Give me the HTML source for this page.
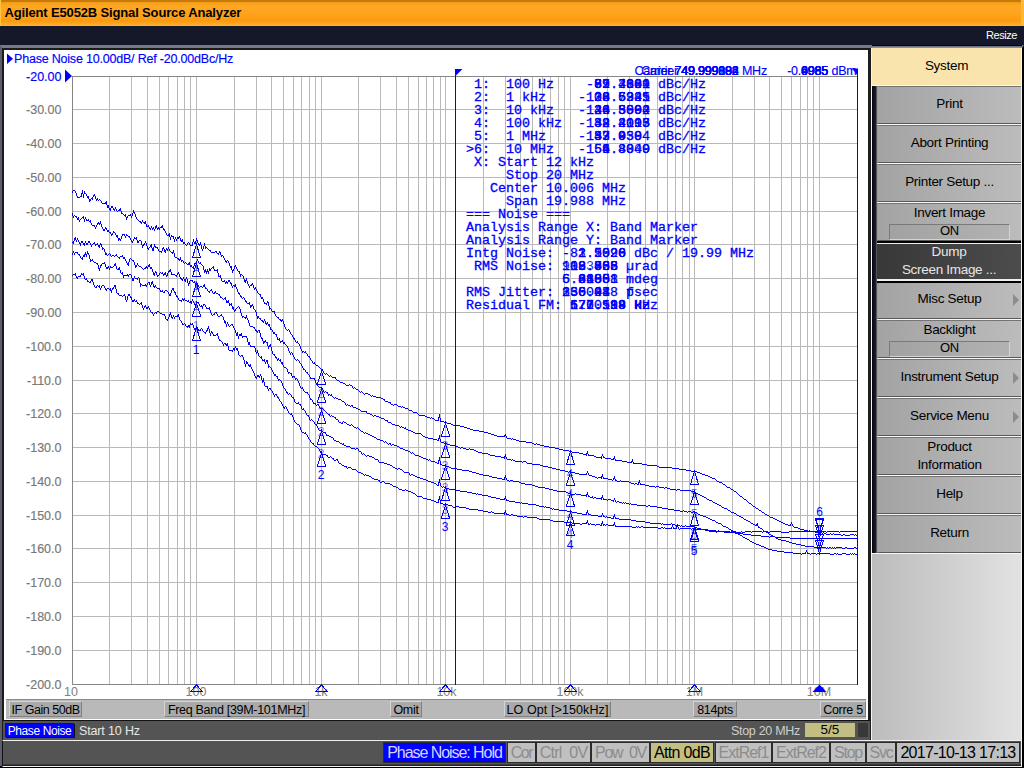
<!DOCTYPE html>
<html><head><meta charset="utf-8"><title>Agilent E5052B Signal Source Analyzer</title>
<style>
*{box-sizing:border-box;margin:0;padding:0}
html,body{width:1024px;height:768px;overflow:hidden;background:#000}
body{position:relative;font-family:"Liberation Sans","DejaVu Sans",sans-serif;font-size:13px;color:#000}
.abs{position:absolute}
#title{position:absolute;left:0;top:0;width:1024px;height:26px;background:linear-gradient(#c47808 0px,#c97c0a 1.5px,#f39c18 2.5px,#ffa824 6px,#ffa31c 14px,#fb9a10 21px,#ffac2c 25px,#ffb63c 26px);border-left:1px solid #ffc640;border-right:3px solid #ffb838}
#title span{position:absolute;left:3.5px;top:5px;font-weight:bold;font-size:13px;letter-spacing:-0.15px;color:#000;white-space:nowrap}
#band{position:absolute;left:0;top:26px;width:1024px;height:20px;background:#151828}
#band span{position:absolute;right:7px;top:3px;color:#fff;font-size:11px;line-height:13px;letter-spacing:-0.45px}
#lframe{position:absolute;left:0;top:45px;width:872px;height:696px;background:#1c1c1c;border-left:2px solid #5a5f6b;border-top:3px solid #747987}
#white{position:absolute;left:4px;top:50px;width:864px;height:670px;background:#fff}
#statrow{position:absolute;left:6px;top:699px;width:860px;height:20px;background:#b9b9b9;border-top:1px solid #8a8a8a}
.sb{position:absolute;top:701px;height:16px;background:#a9a9a9;border:1px solid;border-color:#d4d4d4 #808080 #808080 #d4d4d4;font-size:12.5px;line-height:16px;text-align:center;white-space:nowrap;letter-spacing:-0.3px}
#chrow{position:absolute;left:3px;top:720px;width:867px;height:20px;background:#545454;border-top:1px solid #111}
#pn{position:absolute;left:5px;top:723px;width:69px;height:14px;box-shadow:1px 1px 0 #111;background:#0000ff;color:#fff;font-size:12px;line-height:16px;text-align:center;letter-spacing:-0.4px;white-space:nowrap}
#start{position:absolute;left:79px;top:723.5px;color:#e8e8e8;font-size:12.5px;line-height:15px;white-space:nowrap;letter-spacing:-0.15px}
#stop{position:absolute;left:731px;top:723.5px;color:#cfcfcf;font-size:12.5px;line-height:15px;white-space:nowrap;letter-spacing:-0.3px}
#swp{position:absolute;left:805px;top:723px;width:50px;height:14px;background:#c3bf82;font-size:13.5px;line-height:14px;text-align:center}
#dk{position:absolute;left:858px;top:723px;width:10px;height:14px;background:#383838}
#rpanel{position:absolute;left:872px;top:45px;width:152px;height:696px;background:linear-gradient(90deg,#bcbcbc,#e2e2e2);border-right:2px solid #000;border-top:3px solid #747987}
#rtop{position:absolute;left:872px;top:45px;width:150px;height:3px;background:linear-gradient(#06070c 0,#06070c 1px,#5c6272 1px,#9aa0ae 3px)}
#rline{position:absolute;left:870.5px;top:48px;width:1.7px;height:693px;background:#f6f6f6}
#rline2{position:absolute;left:1021px;top:48px;width:1.2px;height:719px;background:#f6f6f6}
#rwhite{position:absolute;left:872px;top:85px;width:150px;height:469px;background:#f8f8f8}
#sys{position:absolute;left:872px;top:48px;width:149px;height:37px;background:#f9e4ae;text-align:center;line-height:35px;font-size:13.5px;letter-spacing:-0.3px}
#kstrip{position:absolute;left:872px;top:86px;width:5px;height:467px;background:linear-gradient(90deg,#05060c,#1c2030 80%,#8a8a8a)}
.key{position:absolute;left:877px;width:144px;height:38px;background:linear-gradient(90deg,#a3a3a3,#bcbcbc);border-top:1px solid #747474;border-bottom:1px solid #585858;border-left:1px solid #999;text-align:center;font-size:13.5px;letter-spacing:-0.3px;white-space:nowrap}
.key.dark{background:linear-gradient(90deg,#383838,#4c4c4c);color:#e6e6e6;border:0;margin-top:-1px;height:42px;left:877px;border-top:2px solid #000;border-bottom:2px solid #000;box-shadow:inset 0 1px 0 #f0f0f0,inset 0 -2px 0 #f0f0f0;padding-top:0px;z-index:2}
.k1{line-height:34px}
.k2a{line-height:18px}
.k2b{line-height:18px}
.on{margin:2px 11px 0 11px;height:16px;line-height:12px;background:linear-gradient(90deg,#a2a2a2,#b2b2b2);border:1px solid;border-color:#7a7a7a #d4d4d4 #d4d4d4 #7a7a7a;font-size:13px}
.arr{position:absolute;right:2px;top:12px;width:0;height:0;border-left:6px solid #8c8c8c;border-top:6px solid transparent;border-bottom:6px solid transparent}
#bbar{position:absolute;left:2px;top:740px;width:1020px;height:27px;background:#545454;border-top:1.4px solid #f0f0f0;border-bottom:1.4px solid #f0f0f0;border-left:1.5px solid #111;box-shadow:inset 0 -1.5px 0 #222}
.bx{position:absolute;top:742px;height:21px;background:#c0c0c0;border:1px solid #2c2c2c;font-size:16px;line-height:20px;text-align:center;color:#8c8c8c;white-space:nowrap;overflow:hidden;letter-spacing:-0.7px}
.bx.blue{background:#0000ff;color:#d4d4ff;letter-spacing:-1.05px}
.bx.kh{background:#c3bf82;color:#000}
.bx.blk{color:#000}
.yl{position:absolute;left:15.5px;width:46px;text-align:right;font-size:12.5px;line-height:16px;color:#787878;-webkit-text-stroke:0.15px #787878}
.yl.act{color:#0000ff;-webkit-text-stroke:0.15px #0000ff}
.xl{position:absolute;top:685px;font-size:12.5px;line-height:15px;color:#808080}
#hdr{position:absolute;left:14px;top:52px;-webkit-text-stroke:0.15px #0000ff;font-size:12.5px;line-height:15px;color:#0000ff;white-space:nowrap;letter-spacing:-0.2px}
.mono{position:absolute;left:466px;top:79px;font-family:"Liberation Mono","DejaVu Sans Mono",monospace;font-size:12.5px;line-height:13px;transform:scaleX(1.0667);transform-origin:0 0;-webkit-text-stroke:0.3px #0000ff;color:#0000ff;white-space:pre}
.hid{visibility:hidden}
.mono.ex{-webkit-text-stroke:0;opacity:0.85}
.car{position:absolute;left:600px;width:167px;text-align:right;top:64px;font-size:12.5px;-webkit-text-stroke:0.15px #0000ff;line-height:14px;color:#0000ff;white-space:nowrap;letter-spacing:-0.2px}
.pow{position:absolute;left:780px;top:64px;width:76.5px;text-align:right;font-size:12.5px;-webkit-text-stroke:0.15px #0000ff;line-height:14px;color:#0000ff;white-space:nowrap;letter-spacing:-0.2px}
svg text{font-family:"Liberation Sans",sans-serif;font-size:12px;fill:#0000ff}
</style></head><body>
<div id="title"><span>Agilent E5052B Signal Source Analyzer</span></div>
<div id="band"><span>Resize</span></div>
<div id="lframe"></div>
<div style="position:absolute;left:0;top:741px;width:1.5px;height:25px;background:#5a5f6b;z-index:3"></div>
<div id="white"></div>
<div id="hdr">Phase Noise 10.00dB/ Ref -20.00dBc/Hz</div>
<div class="yl act" style="top:69px">-20.00</div><div class="yl" style="top:102px">-30.00</div><div class="yl" style="top:136px">-40.00</div><div class="yl" style="top:170px">-50.00</div><div class="yl" style="top:204px">-60.00</div><div class="yl" style="top:237px">-70.00</div><div class="yl" style="top:271px">-80.00</div><div class="yl" style="top:305px">-90.00</div><div class="yl" style="top:339px">-100.0</div><div class="yl" style="top:373px">-110.0</div><div class="yl" style="top:406px">-120.0</div><div class="yl" style="top:440px">-130.0</div><div class="yl" style="top:474px">-140.0</div><div class="yl" style="top:508px">-150.0</div><div class="yl" style="top:541px">-160.0</div><div class="yl" style="top:575px">-170.0</div><div class="yl" style="top:609px">-180.0</div><div class="yl" style="top:643px">-190.0</div><div class="yl" style="top:677px">-200.0</div>
<div class="xl" style="left:64px;text-align:left">10</div><div class="xl" style="left:176px;width:40px;text-align:center">100</div><div class="xl" style="left:301px;width:40px;text-align:center">1k</div><div class="xl" style="left:426.5px;width:40px;text-align:center">10k</div><div class="xl" style="left:550px;width:40px;text-align:center">100k</div><div class="xl" style="left:674.5px;width:40px;text-align:center">1M</div><div class="xl" style="left:799px;width:40px;text-align:center">10M</div>
<svg class="abs" style="left:0;top:0" width="872" height="700" viewBox="0 0 872 700">
<path d="M109.5 76V684M131.5 76V684M147.5 76V684M159.5 76V684M168.5 76V684M177.5 76V684M184.5 76V684M190.5 76V684M196.5 76V684M234.5 76V684M256.5 76V684M271.5 76V684M283.5 76V684M293.5 76V684M301.5 76V684M309.5 76V684M315.5 76V684M321.5 76V684M358.5 76V684M380.5 76V684M396.5 76V684M408.5 76V684M418.5 76V684M426.5 76V684M433.5 76V684M440.5 76V684M445.5 76V684M483.5 76V684M505.5 76V684M520.5 76V684M532.5 76V684M542.5 76V684M550.5 76V684M558.5 76V684M564.5 76V684M570.5 76V684M607.5 76V684M629.5 76V684M645.5 76V684M657.5 76V684M667.5 76V684M675.5 76V684M682.5 76V684M689.5 76V684M694.5 76V684M732.5 76V684M754.5 76V684M769.5 76V684M781.5 76V684M791.5 76V684M800.5 76V684M807.5 76V684M813.5 76V684M819.5 76V684M72 109.5H857M72 143.5H857M72 177.5H857M72 211.5H857M72 244.5H857M72 278.5H857M72 312.5H857M72 346.5H857M72 380.5H857M72 413.5H857M72 447.5H857M72 481.5H857M72 515.5H857M72 548.5H857M72 582.5H857M72 616.5H857M72 650.5H857" stroke="#b9b9b9" stroke-width="1" fill="none" shape-rendering="crispEdges"/>
<path d="M72.5 76V684.5H857" stroke="#868686" stroke-width="1" fill="none" shape-rendering="crispEdges"/>
<path d="M72 76.5H857" stroke="#868686" stroke-width="1" fill="none" shape-rendering="crispEdges"/>
<path d="M857.5 70V685M455.5 69V685" stroke="#0000ff" stroke-width="1" fill="none" shape-rendering="crispEdges"/>
<path d="M455 69h7.5l-7.5 7.5z" fill="#0000ff"/>
<path d="M852 68.5h6v7.5z" fill="#0000ff"/>
<path d="M7 53.5l6 5.2-6 5.2zM65 69.5l7 6.5-7 6.5z" fill="#0000ff"/>
<path d="M72.5 191v2M73.5 190v1M74.5 190v1M75.5 191v2M76.5 193v3M77.5 196v2M78.5 197v1M79.5 197v1M80.5 196v1M81.5 193v4M82.5 190v4M83.5 194v4M84.5 191v3M85.5 193v1M86.5 194v2M87.5 196v2M88.5 196v3M89.5 199v3M90.5 199v2M91.5 198v1M92.5 197v3M93.5 195v2M94.5 194v2M95.5 196v3M96.5 199v2M97.5 198v2M98.5 200v1M99.5 199v1M100.5 200v1M101.5 201v2M102.5 203v1M103.5 203v1M104.5 203v1M105.5 202v2M106.5 201v4M107.5 205v3M108.5 205v3M109.5 208v2M110.5 208v3M111.5 206v2M112.5 206v2M113.5 208v2M114.5 209v2M115.5 207v2M116.5 209v2M117.5 211v1M118.5 210v1M119.5 209v2M120.5 208v3M121.5 211v3M122.5 213v1M123.5 214v1M124.5 215v1M125.5 214v3M126.5 217v3M127.5 216v2M128.5 215v1M129.5 215v1M130.5 214v2M131.5 216v2M132.5 213v3M133.5 210v3M134.5 212v2M135.5 214v3M136.5 217v2M137.5 219v1M138.5 220v1M139.5 221v1M140.5 221v2M141.5 222v2M142.5 220v2M143.5 222v1M144.5 222v2M145.5 221v3M146.5 224v3M147.5 226v1M148.5 225v2M149.5 227v2M150.5 228v2M151.5 226v2M152.5 228v2M153.5 227v2M154.5 229v2M155.5 226v3M156.5 225v3M157.5 228v2M158.5 227v2M159.5 228v2M160.5 227v1M161.5 226v2M162.5 225v3M163.5 228v2M164.5 229v2M165.5 231v2M166.5 233v2M167.5 235v1M168.5 234v2M169.5 233v4M170.5 237v3M171.5 235v2M172.5 236v1M173.5 236v3M174.5 239v3M175.5 237v2M176.5 239v2M177.5 237v2M178.5 237v2M179.5 236v2M180.5 238v3M181.5 240v2M182.5 239v3M183.5 242v2M184.5 242v2M185.5 244v1M186.5 245v1M187.5 243v2M188.5 242v1M189.5 243v2M190.5 245v1M191.5 245v1M192.5 242v4M193.5 239v3M194.5 242v2M195.5 241v3M196.5 238v3M197.5 240v3M198.5 243v2M199.5 244v2M200.5 242v3M201.5 245v4M202.5 249v2M203.5 246v3M204.5 243v3M205.5 246v3M206.5 247v1M207.5 248v1M208.5 249v1M209.5 250v1M210.5 250v2M211.5 252v1M212.5 252v1M213.5 252v1M214.5 252v1M215.5 251v1M216.5 251v2M217.5 253v1M218.5 253v2M219.5 251v2M220.5 252v3M221.5 255v2M222.5 255v1M223.5 256v2M224.5 258v2M225.5 260v2M226.5 261v2M227.5 260v1M228.5 261v2M229.5 263v3M230.5 266v2M231.5 266v4M232.5 270v3M233.5 269v2M234.5 266v3M235.5 265v2M236.5 267v2M237.5 269v2M238.5 271v1M239.5 271v3M240.5 274v3M241.5 274v1M242.5 275v1M243.5 276v3M244.5 279v3M245.5 280v3M246.5 278v3M247.5 281v3M248.5 284v2M249.5 286v2M250.5 285v1M251.5 284v2M252.5 283v2M253.5 285v3M254.5 288v2M255.5 287v2M256.5 289v2M257.5 291v2M258.5 293v1M259.5 294v1M260.5 294v3M261.5 297v2M262.5 297v2M263.5 299v3M264.5 302v2M265.5 303v1M266.5 303v2M267.5 301v2M268.5 302v4M269.5 306v4M270.5 308v1M271.5 309v2M272.5 311v1M273.5 311v1M274.5 311v3M275.5 314v2M276.5 316v1M277.5 317v1M278.5 317v2M279.5 319v1M280.5 319v2M281.5 320v2M282.5 319v2M283.5 321v3M284.5 324v3M285.5 327v2M286.5 329v1M287.5 330v1M288.5 329v1M289.5 330v2M290.5 332v2M291.5 334v1M292.5 335v2M293.5 337v2M294.5 338v2M295.5 340v2M296.5 342v1M297.5 341v2M298.5 343v1M299.5 344v2M300.5 346v3M301.5 349v2M302.5 351v2M303.5 351v1M304.5 352v1M305.5 351v2M306.5 353v1M307.5 354v2M308.5 356v1M309.5 356v2M310.5 358v2M311.5 360v1M312.5 361v2M313.5 363v1M314.5 362v2M315.5 364v1M316.5 365v1M317.5 365v1M318.5 366v1M319.5 367v1M320.5 368v1M321.5 369v1M322.5 369v2M323.5 371v2M324.5 373v1M325.5 374v1M326.5 373v1M327.5 374v1M328.5 375v1M329.5 376v1M330.5 375v1M331.5 376v1M332.5 377v1M333.5 377v1M334.5 377v1M335.5 377v2M336.5 379v1M337.5 380v1M338.5 380v1M339.5 381v1M340.5 382v1M341.5 382v1M342.5 382v1M343.5 383v1M344.5 383v1M345.5 384v1M346.5 385v1M347.5 385v1M348.5 385v1M349.5 384v1M350.5 385v1M351.5 385v1M352.5 386v2M353.5 388v1M354.5 387v1M355.5 388v1M356.5 389v1M357.5 389v1M358.5 390v1M359.5 391v1M360.5 392v1M361.5 391v1M362.5 392v1M363.5 393v1M364.5 394v1M365.5 393v1M366.5 393v1M367.5 393v1M368.5 394v1M369.5 394v1M370.5 395v1M371.5 396v1M372.5 395v1M373.5 396v1M374.5 396v1M375.5 396v1M376.5 397v1M377.5 397v1M378.5 397v1M379.5 397v1M380.5 397v1M381.5 398v1M382.5 398v1M383.5 399v1M384.5 399v2M385.5 401v1M386.5 401v1M387.5 401v1M388.5 402v1M389.5 402v1M390.5 402v2M391.5 404v1M392.5 404v1M393.5 405v1M394.5 404v1M395.5 404v1M396.5 404v1M397.5 405v1M398.5 406v1M399.5 406v1M400.5 406v1M401.5 407v1M402.5 406v1M403.5 407v1M404.5 407v1M405.5 408v1M406.5 408v1M407.5 408v1M408.5 409v1M409.5 410v1M410.5 410v1M411.5 410v1M412.5 411v1M413.5 412v1M414.5 412v1M415.5 412v1M416.5 412v1M417.5 413v1M418.5 414v1M419.5 415v1M420.5 415v1M421.5 415v1M422.5 415v1M423.5 415v1M424.5 415v1M425.5 416v1M426.5 416v1M427.5 417v1M428.5 417v1M429.5 417v1M430.5 418v1M431.5 417v1M432.5 418v1M433.5 418v1M434.5 419v1M435.5 420v1M436.5 420v1M437.5 420v1M438.5 417v4M439.5 414v4M440.5 418v4M441.5 421v1M442.5 421v1M443.5 421v1M444.5 422v1M445.5 422v1M446.5 422v1M447.5 423v1M448.5 423v1M449.5 423v1M450.5 423v1M451.5 424v1M452.5 424v1M453.5 425v1M454.5 425v1M455.5 425v1M456.5 425v1M457.5 425v1M458.5 425v1M459.5 425v1M460.5 426v1M461.5 426v1M462.5 426v1M463.5 426v1M464.5 427v1M465.5 427v1M466.5 427v1M467.5 428v1M468.5 428v1M469.5 428v1M470.5 429v1M471.5 429v1M472.5 429v1M473.5 430v1M474.5 430v1M475.5 430v1M476.5 430v1M477.5 430v1M478.5 430v1M479.5 431v1M480.5 431v1M481.5 431v1M482.5 431v1M483.5 431v1M484.5 432v1M485.5 432v1M486.5 432v1M487.5 432v1M488.5 433v1M489.5 433v1M490.5 433v1M491.5 434v1M492.5 434v1M493.5 434v1M494.5 435v1M495.5 435v1M496.5 435v1M497.5 436v1M498.5 436v1M499.5 436v1M500.5 436v1M501.5 436v1M502.5 436v1M503.5 436v1M504.5 435v2M505.5 434v2M506.5 436v2M507.5 438v1M508.5 438v1M509.5 438v1M510.5 438v1M511.5 439v1M512.5 438v1M513.5 439v1M514.5 439v1M515.5 439v1M516.5 440v1M517.5 440v1M518.5 440v1M519.5 441v1M520.5 441v1M521.5 441v1M522.5 441v1M523.5 441v1M524.5 441v1M525.5 441v1M526.5 442v1M527.5 442v1M528.5 442v1M529.5 442v1M530.5 442v1M531.5 442v1M532.5 443v1M533.5 443v1M534.5 444v1M535.5 444v1M536.5 443v1M537.5 444v1M538.5 444v1M539.5 444v1M540.5 445v1M541.5 445v1M542.5 445v1M543.5 445v1M544.5 446v1M545.5 446v1M546.5 446v1M547.5 446v1M548.5 446v1M549.5 447v1M550.5 447v1M551.5 447v1M552.5 447v1M553.5 447v1M554.5 447v1M555.5 448v1M556.5 448v1M557.5 448v1M558.5 448v1M559.5 449v1M560.5 449v1M561.5 449v1M562.5 449v1M563.5 450v1M564.5 450v1M565.5 450v1M566.5 450v1M567.5 450v1M568.5 450v1M569.5 451v1M570.5 451v1M571.5 451v1M572.5 452v1M573.5 452v1M574.5 452v1M575.5 452v1M576.5 452v1M577.5 452v1M578.5 452v1M579.5 453v1M580.5 453v1M581.5 453v1M582.5 453v1M583.5 454v1M584.5 454v1M585.5 454v1M586.5 453v3M587.5 451v3M588.5 454v2M589.5 455v1M590.5 455v1M591.5 455v1M592.5 455v1M593.5 455v1M594.5 456v1M595.5 456v1M596.5 457v1M597.5 457v1M598.5 457v1M599.5 457v1M600.5 457v1M601.5 456v3M602.5 454v2M603.5 456v2M604.5 457v1M605.5 458v1M606.5 458v1M607.5 458v1M608.5 458v1M609.5 458v1M610.5 458v1M611.5 459v1M612.5 459v1M613.5 458v2M614.5 456v3M615.5 459v2M616.5 460v1M617.5 460v1M618.5 460v1M619.5 460v1M620.5 460v1M621.5 460v1M622.5 461v1M623.5 461v1M624.5 461v1M625.5 461v1M626.5 461v1M627.5 462v1M628.5 462v1M629.5 462v1M630.5 462v1M631.5 461v2M632.5 459v3M633.5 462v2M634.5 463v1M635.5 463v1M636.5 463v1M637.5 463v1M638.5 463v1M639.5 463v1M640.5 463v1M641.5 463v1M642.5 464v1M643.5 464v1M644.5 464v1M645.5 464v1M646.5 464v1M647.5 465v1M648.5 465v1M649.5 465v1M650.5 465v1M651.5 465v1M652.5 465v1M653.5 465v1M654.5 465v1M655.5 465v1M656.5 465v1M657.5 466v1M658.5 466v1M659.5 467v1M660.5 467v1M661.5 467v1M662.5 467v1M663.5 467v1M664.5 467v1M665.5 467v1M666.5 467v1M667.5 467v1M668.5 467v1M669.5 467v1M670.5 467v1M671.5 467v1M672.5 468v1M673.5 468v1M674.5 468v1M675.5 468v1M676.5 468v1M677.5 468v1M678.5 468v1M679.5 469v1M680.5 469v1M681.5 469v1M682.5 469v1M683.5 469v1M684.5 469v1M685.5 469v1M686.5 470v1M687.5 470v1M688.5 470v1M689.5 470v1M690.5 470v1M691.5 471v1M692.5 471v1M693.5 471v1M694.5 471v1M695.5 471v1M696.5 471v1M697.5 472v1M698.5 472v1M699.5 472v1M700.5 473v1M701.5 473v1M702.5 474v1M703.5 474v1M704.5 474v1M705.5 475v1M706.5 475v1M707.5 475v1M708.5 476v1M709.5 476v1M710.5 477v1M711.5 477v1M712.5 478v1M713.5 478v1M714.5 478v1M715.5 479v1M716.5 480v1M717.5 481v1M718.5 481v1M719.5 482v1M720.5 482v1M721.5 482v1M722.5 483v1M723.5 484v1M724.5 484v1M725.5 485v1M726.5 486v1M727.5 487v1M728.5 487v1M729.5 487v1M730.5 488v1M731.5 489v1M732.5 489v1M733.5 490v1M734.5 491v1M735.5 491v1M736.5 492v1M737.5 493v1M738.5 494v1M739.5 495v1M740.5 496v1M741.5 496v1M742.5 497v1M743.5 498v1M744.5 499v1M745.5 499v1M746.5 500v1M747.5 501v1M748.5 502v1M749.5 503v1M750.5 503v1M751.5 504v1M752.5 505v1M753.5 506v1M754.5 506v1M755.5 507v1M756.5 508v1M757.5 508v1M758.5 509v1M759.5 510v1M760.5 510v1M761.5 511v1M762.5 512v1M763.5 512v1M764.5 513v1M765.5 514v1M766.5 514v1M767.5 515v1M768.5 515v1M769.5 516v1M770.5 517v1M771.5 517v1M772.5 517v1M773.5 518v1M774.5 518v1M775.5 519v1M776.5 519v1M777.5 520v1M778.5 520v1M779.5 521v1M780.5 521v1M781.5 522v1M782.5 522v1M783.5 523v1M784.5 523v1M785.5 524v1M786.5 524v1M787.5 524v1M788.5 525v1M789.5 525v1M790.5 524v2M791.5 522v2M792.5 524v2M793.5 526v1M794.5 527v1M795.5 527v1M796.5 527v1M797.5 527v1M798.5 528v1M799.5 528v1M800.5 529v1M801.5 529v1M802.5 529v1M803.5 529v1M804.5 530v1M805.5 530v1M806.5 530v1M807.5 530v1M808.5 531v1M809.5 530v1M810.5 531v1M811.5 531v1M812.5 531v1M813.5 531v1M814.5 531v1M815.5 532v1M816.5 532v1M817.5 532v1M818.5 532v1M819.5 532v1M820.5 532v1M821.5 532v1M822.5 533v1M823.5 532v1M824.5 533v1M825.5 533v1M826.5 534v1M827.5 534v1M828.5 534v1M829.5 534v1M830.5 533v1M831.5 534v1M832.5 534v1M833.5 533v1M834.5 534v1M835.5 534v1M836.5 534v1M837.5 534v1M838.5 534v1M839.5 534v1M840.5 534v1M841.5 535v1M842.5 535v1M843.5 534v1M844.5 534v1M845.5 535v1M846.5 535v1M847.5 535v1M848.5 535v1M849.5 535v1M850.5 534v1M851.5 534v1M852.5 534v1M853.5 534v1M854.5 535v1M855.5 534v1M856.5 535v1M857.5 534v1" stroke="#0000ff" stroke-width="1" fill="none" stroke-linejoin="round" shape-rendering="crispEdges"/><path d="M72.5 213v3M73.5 216v2M74.5 215v1M75.5 216v1M76.5 216v2M77.5 218v2M78.5 217v3M79.5 220v2M80.5 219v1M81.5 218v1M82.5 217v1M83.5 216v3M84.5 219v3M85.5 217v2M86.5 219v2M87.5 220v1M88.5 219v2M89.5 221v1M90.5 220v3M91.5 223v2M92.5 225v1M93.5 225v1M94.5 225v2M95.5 227v2M96.5 225v2M97.5 223v2M98.5 222v2M99.5 223v2M100.5 221v3M101.5 224v3M102.5 227v2M103.5 229v2M104.5 229v2M105.5 227v2M106.5 228v2M107.5 230v2M108.5 230v2M109.5 232v1M110.5 232v2M111.5 234v2M112.5 233v2M113.5 231v2M114.5 232v1M115.5 233v2M116.5 235v2M117.5 235v3M118.5 238v3M119.5 238v2M120.5 239v2M121.5 236v3M122.5 234v2M123.5 234v1M124.5 234v2M125.5 236v2M126.5 234v2M127.5 235v1M128.5 236v1M129.5 236v2M130.5 238v2M131.5 240v2M132.5 241v2M133.5 239v2M134.5 237v2M135.5 238v1M136.5 237v3M137.5 240v3M138.5 241v2M139.5 240v1M140.5 240v1M141.5 241v4M142.5 245v3M143.5 244v2M144.5 243v2M145.5 241v2M146.5 243v3M147.5 246v3M148.5 248v2M149.5 247v1M150.5 245v2M151.5 244v4M152.5 248v3M153.5 247v4M154.5 244v3M155.5 246v2M156.5 247v1M157.5 247v2M158.5 249v2M159.5 251v1M160.5 251v1M161.5 251v2M162.5 248v3M163.5 247v2M164.5 249v3M165.5 250v3M166.5 248v2M167.5 249v2M168.5 247v2M169.5 249v2M170.5 251v1M171.5 252v1M172.5 252v2M173.5 250v3M174.5 253v4M175.5 257v1M176.5 257v1M177.5 258v1M178.5 258v2M179.5 259v2M180.5 257v3M181.5 260v2M182.5 260v1M183.5 261v2M184.5 263v1M185.5 262v1M186.5 263v1M187.5 264v1M188.5 263v2M189.5 262v3M190.5 265v2M191.5 265v2M192.5 267v1M193.5 266v3M194.5 263v3M195.5 263v1M196.5 261v2M197.5 259v2M198.5 261v2M199.5 263v1M200.5 262v2M201.5 264v1M202.5 265v1M203.5 266v4M204.5 270v3M205.5 269v3M206.5 271v3M207.5 269v3M208.5 271v3M209.5 268v3M210.5 269v2M211.5 268v1M212.5 267v1M213.5 266v3M214.5 269v2M215.5 270v1M216.5 270v1M217.5 269v4M218.5 273v4M219.5 276v1M220.5 275v3M221.5 278v3M222.5 281v1M223.5 281v1M224.5 280v2M225.5 282v2M226.5 281v2M227.5 282v2M228.5 280v2M229.5 280v2M230.5 282v2M231.5 283v3M232.5 286v2M233.5 285v1M234.5 285v2M235.5 284v3M236.5 287v2M237.5 289v3M238.5 292v2M239.5 293v2M240.5 295v2M241.5 296v2M242.5 298v1M243.5 297v1M244.5 298v2M245.5 300v2M246.5 301v2M247.5 303v1M248.5 303v1M249.5 302v3M250.5 305v3M251.5 305v2M252.5 304v2M253.5 306v3M254.5 309v1M255.5 310v2M256.5 312v4M257.5 316v3M258.5 316v2M259.5 318v1M260.5 318v2M261.5 320v1M262.5 320v2M263.5 321v2M264.5 319v2M265.5 321v3M266.5 323v2M267.5 322v2M268.5 324v2M269.5 324v3M270.5 327v3M271.5 329v1M272.5 330v2M273.5 332v2M274.5 332v2M275.5 334v1M276.5 334v3M277.5 337v3M278.5 339v1M279.5 338v3M280.5 341v2M281.5 341v1M282.5 340v2M283.5 342v2M284.5 342v2M285.5 344v1M286.5 345v1M287.5 346v2M288.5 348v3M289.5 351v2M290.5 353v2M291.5 352v1M292.5 353v2M293.5 355v2M294.5 357v2M295.5 359v1M296.5 360v1M297.5 359v1M298.5 360v1M299.5 361v2M300.5 363v1M301.5 364v2M302.5 366v2M303.5 368v2M304.5 369v1M305.5 370v2M306.5 372v1M307.5 372v2M308.5 374v1M309.5 375v2M310.5 377v2M311.5 378v1M312.5 378v1M313.5 378v1M314.5 378v2M315.5 380v3M316.5 383v2M317.5 385v1M318.5 386v1M319.5 387v1M320.5 387v1M321.5 387v1M322.5 388v2M323.5 390v2M324.5 392v1M325.5 391v1M326.5 392v1M327.5 392v2M328.5 394v2M329.5 394v1M330.5 395v1M331.5 394v2M332.5 396v1M333.5 397v1M334.5 398v1M335.5 397v1M336.5 398v1M337.5 398v1M338.5 399v1M339.5 399v1M340.5 399v1M341.5 400v1M342.5 401v1M343.5 401v1M344.5 402v1M345.5 403v2M346.5 405v1M347.5 404v1M348.5 405v1M349.5 405v1M350.5 406v1M351.5 405v1M352.5 405v2M353.5 407v1M354.5 407v1M355.5 407v1M356.5 408v1M357.5 408v1M358.5 409v1M359.5 409v1M360.5 410v1M361.5 411v1M362.5 411v1M363.5 411v1M364.5 411v1M365.5 411v1M366.5 411v2M367.5 413v1M368.5 413v1M369.5 413v1M370.5 414v1M371.5 414v1M372.5 415v1M373.5 416v1M374.5 415v1M375.5 415v1M376.5 416v1M377.5 416v1M378.5 416v1M379.5 417v1M380.5 417v1M381.5 418v1M382.5 418v1M383.5 418v1M384.5 419v1M385.5 420v1M386.5 420v1M387.5 420v2M388.5 422v1M389.5 422v1M390.5 422v1M391.5 423v1M392.5 424v1M393.5 424v1M394.5 424v1M395.5 425v1M396.5 425v1M397.5 425v1M398.5 425v1M399.5 426v1M400.5 427v1M401.5 426v1M402.5 427v1M403.5 427v1M404.5 428v1M405.5 427v2M406.5 429v1M407.5 429v1M408.5 430v1M409.5 430v1M410.5 430v1M411.5 431v1M412.5 431v1M413.5 432v1M414.5 432v1M415.5 433v1M416.5 433v1M417.5 433v1M418.5 433v1M419.5 433v1M420.5 433v1M421.5 434v1M422.5 435v1M423.5 436v1M424.5 436v1M425.5 437v1M426.5 437v1M427.5 437v1M428.5 438v1M429.5 438v1M430.5 438v1M431.5 438v1M432.5 438v1M433.5 439v1M434.5 439v1M435.5 439v1M436.5 439v1M437.5 440v1M438.5 438v3M439.5 435v4M440.5 439v3M441.5 442v1M442.5 442v1M443.5 442v1M444.5 443v1M445.5 443v1M446.5 443v1M447.5 444v1M448.5 444v1M449.5 444v1M450.5 445v1M451.5 445v1M452.5 445v1M453.5 445v1M454.5 445v1M455.5 446v1M456.5 446v1M457.5 446v1M458.5 447v1M459.5 447v1M460.5 448v1M461.5 447v1M462.5 447v1M463.5 448v1M464.5 448v1M465.5 448v1M466.5 449v1M467.5 449v1M468.5 449v1M469.5 448v1M470.5 449v1M471.5 449v1M472.5 449v1M473.5 449v1M474.5 450v1M475.5 450v1M476.5 451v1M477.5 451v1M478.5 452v1M479.5 452v1M480.5 452v1M481.5 452v1M482.5 453v1M483.5 453v1M484.5 453v1M485.5 453v1M486.5 453v1M487.5 453v1M488.5 454v1M489.5 454v1M490.5 455v1M491.5 455v1M492.5 455v1M493.5 455v1M494.5 455v1M495.5 456v1M496.5 456v1M497.5 456v1M498.5 456v1M499.5 456v1M500.5 456v1M501.5 457v1M502.5 457v1M503.5 457v1M504.5 456v3M505.5 454v3M506.5 457v2M507.5 459v1M508.5 459v1M509.5 459v1M510.5 459v1M511.5 460v1M512.5 459v1M513.5 460v1M514.5 460v1M515.5 461v1M516.5 461v1M517.5 461v1M518.5 461v1M519.5 461v1M520.5 461v1M521.5 461v1M522.5 462v1M523.5 461v1M524.5 461v1M525.5 461v1M526.5 462v1M527.5 463v1M528.5 463v1M529.5 463v1M530.5 463v1M531.5 463v1M532.5 464v1M533.5 464v1M534.5 464v1M535.5 464v1M536.5 464v1M537.5 464v1M538.5 464v1M539.5 464v1M540.5 465v1M541.5 465v1M542.5 465v1M543.5 466v1M544.5 466v1M545.5 466v1M546.5 466v1M547.5 466v1M548.5 467v1M549.5 467v1M550.5 467v1M551.5 467v1M552.5 468v1M553.5 468v1M554.5 468v1M555.5 468v1M556.5 469v1M557.5 469v1M558.5 469v1M559.5 469v1M560.5 470v1M561.5 470v1M562.5 470v1M563.5 470v1M564.5 470v1M565.5 471v1M566.5 471v1M567.5 471v1M568.5 472v1M569.5 471v1M570.5 472v1M571.5 472v1M572.5 472v1M573.5 472v1M574.5 472v1M575.5 473v1M576.5 473v1M577.5 473v1M578.5 473v1M579.5 474v1M580.5 474v1M581.5 474v1M582.5 474v1M583.5 474v1M584.5 474v1M585.5 474v1M586.5 473v2M587.5 471v2M588.5 473v2M589.5 475v1M590.5 475v1M591.5 475v1M592.5 476v1M593.5 476v1M594.5 476v1M595.5 477v1M596.5 477v1M597.5 478v1M598.5 477v1M599.5 477v1M600.5 477v1M601.5 476v3M602.5 474v3M603.5 477v2M604.5 478v1M605.5 478v1M606.5 478v1M607.5 478v1M608.5 479v1M609.5 479v1M610.5 479v1M611.5 479v1M612.5 480v1M613.5 478v2M614.5 476v3M615.5 479v2M616.5 480v1M617.5 481v1M618.5 481v1M619.5 481v1M620.5 480v1M621.5 481v1M622.5 481v1M623.5 481v1M624.5 481v1M625.5 481v1M626.5 481v1M627.5 481v1M628.5 481v1M629.5 482v1M630.5 482v1M631.5 483v1M632.5 483v1M633.5 483v1M634.5 484v1M635.5 483v1M636.5 483v1M637.5 484v1M638.5 482v3M639.5 480v3M640.5 483v2M641.5 484v1M642.5 484v1M643.5 484v1M644.5 484v1M645.5 485v1M646.5 485v1M647.5 485v1M648.5 485v1M649.5 486v1M650.5 486v1M651.5 486v1M652.5 486v1M653.5 486v1M654.5 486v1M655.5 487v1M656.5 486v1M657.5 486v1M658.5 486v1M659.5 487v1M660.5 487v1M661.5 487v1M662.5 487v1M663.5 487v1M664.5 488v1M665.5 487v1M666.5 487v1M667.5 488v1M668.5 488v1M669.5 488v1M670.5 489v1M671.5 489v1M672.5 489v1M673.5 489v1M674.5 489v1M675.5 489v1M676.5 490v1M677.5 489v1M678.5 489v1M679.5 489v1M680.5 490v1M681.5 490v1M682.5 490v1M683.5 490v1M684.5 490v1M685.5 490v1M686.5 490v1M687.5 490v1M688.5 490v1M689.5 490v1M690.5 490v1M691.5 491v1M692.5 491v1M693.5 491v1M694.5 492v1M695.5 492v1M696.5 493v1M697.5 493v1M698.5 494v1M699.5 494v1M700.5 495v1M701.5 495v1M702.5 496v1M703.5 496v1M704.5 497v1M705.5 497v1M706.5 498v1M707.5 499v1M708.5 499v1M709.5 500v1M710.5 500v1M711.5 500v1M712.5 501v1M713.5 502v1M714.5 502v1M715.5 503v1M716.5 503v1M717.5 504v1M718.5 504v1M719.5 505v1M720.5 505v1M721.5 506v1M722.5 507v1M723.5 507v1M724.5 508v1M725.5 508v1M726.5 508v1M727.5 509v1M728.5 510v1M729.5 510v1M730.5 511v1M731.5 512v1M732.5 512v1M733.5 512v1M734.5 513v1M735.5 513v1M736.5 514v1M737.5 515v1M738.5 515v1M739.5 516v1M740.5 516v1M741.5 517v1M742.5 517v1M743.5 518v1M744.5 519v1M745.5 519v1M746.5 520v1M747.5 520v1M748.5 521v1M749.5 521v1M750.5 522v1M751.5 523v1M752.5 523v1M753.5 524v1M754.5 524v1M755.5 525v1M756.5 524v2M757.5 523v3M758.5 526v2M759.5 527v1M760.5 528v1M761.5 528v1M762.5 529v1M763.5 530v1M764.5 531v1M765.5 531v1M766.5 532v1M767.5 532v1M768.5 533v1M769.5 534v1M770.5 534v1M771.5 535v1M772.5 535v1M773.5 536v1M774.5 536v1M775.5 537v1M776.5 538v1M777.5 538v1M778.5 539v1M779.5 539v1M780.5 539v1M781.5 540v1M782.5 540v1M783.5 540v1M784.5 540v1M785.5 540v1M786.5 541v1M787.5 541v1M788.5 541v1M789.5 542v1M790.5 542v1M791.5 542v1M792.5 543v1M793.5 543v1M794.5 543v1M795.5 543v1M796.5 544v1M797.5 544v1M798.5 544v1M799.5 544v1M800.5 544v1M801.5 545v1M802.5 545v1M803.5 545v1M804.5 545v1M805.5 546v1M806.5 546v1M807.5 546v1M808.5 546v1M809.5 546v1M810.5 546v1M811.5 546v1M812.5 546v1M813.5 546v1M814.5 547v1M815.5 547v1M816.5 547v1M817.5 547v1M818.5 547v1M819.5 547v1M820.5 547v1M821.5 547v1M822.5 547v1M823.5 547v1M824.5 547v1M825.5 547v1M826.5 548v1M827.5 547v1M828.5 548v1M829.5 547v1M830.5 547v1M831.5 548v1M832.5 547v1M833.5 548v1M834.5 547v1M835.5 548v1M836.5 547v1M837.5 547v1M838.5 547v1M839.5 547v1M840.5 547v1M841.5 547v1M842.5 548v1M843.5 548v1M844.5 548v1M845.5 547v1M846.5 547v1M847.5 548v1M848.5 548v1M849.5 548v1M850.5 548v1M851.5 548v1M852.5 548v1M853.5 548v1M854.5 547v1M855.5 547v1M856.5 548v1M857.5 547v1" stroke="#0000ff" stroke-width="1" fill="none" stroke-linejoin="round" shape-rendering="crispEdges"/><path d="M72.5 242v1M73.5 241v3M74.5 238v3M75.5 237v3M76.5 240v2M77.5 238v2M78.5 240v2M79.5 242v2M80.5 243v3M81.5 241v2M82.5 241v2M83.5 243v2M84.5 243v3M85.5 241v2M86.5 243v2M87.5 243v2M88.5 241v2M89.5 241v2M90.5 243v2M91.5 245v2M92.5 244v1M93.5 243v1M94.5 242v2M95.5 244v2M96.5 244v1M97.5 243v2M98.5 245v2M99.5 245v3M100.5 243v2M101.5 244v3M102.5 247v3M103.5 248v1M104.5 249v3M105.5 252v3M106.5 253v2M107.5 255v1M108.5 254v1M109.5 253v1M110.5 254v2M111.5 256v1M112.5 255v1M113.5 255v1M114.5 256v1M115.5 255v1M116.5 254v2M117.5 256v1M118.5 257v1M119.5 257v2M120.5 256v1M121.5 256v1M122.5 255v2M123.5 257v2M124.5 257v2M125.5 259v2M126.5 261v2M127.5 263v2M128.5 262v4M129.5 259v3M130.5 258v1M131.5 259v1M132.5 260v1M133.5 260v2M134.5 262v3M135.5 265v3M136.5 265v2M137.5 263v2M138.5 265v1M139.5 266v1M140.5 266v1M141.5 267v1M142.5 268v1M143.5 269v1M144.5 268v1M145.5 267v2M146.5 266v2M147.5 267v2M148.5 265v2M149.5 264v3M150.5 267v2M151.5 267v2M152.5 269v3M153.5 272v3M154.5 273v3M155.5 271v2M156.5 272v3M157.5 275v2M158.5 275v1M159.5 273v2M160.5 272v1M161.5 273v1M162.5 272v2M163.5 274v2M164.5 273v2M165.5 272v3M166.5 275v2M167.5 273v3M168.5 271v2M169.5 270v2M170.5 269v3M171.5 272v3M172.5 274v1M173.5 274v1M174.5 274v1M175.5 275v1M176.5 275v2M177.5 273v2M178.5 272v2M179.5 274v3M180.5 277v2M181.5 278v2M182.5 279v2M183.5 277v2M184.5 279v2M185.5 279v3M186.5 277v2M187.5 279v4M188.5 283v3M189.5 281v3M190.5 280v1M191.5 280v1M192.5 280v2M193.5 282v1M194.5 281v2M195.5 283v2M196.5 284v1M197.5 283v2M198.5 285v2M199.5 287v1M200.5 286v1M201.5 286v1M202.5 287v1M203.5 285v2M204.5 284v3M205.5 287v2M206.5 288v1M207.5 289v2M208.5 291v1M209.5 291v2M210.5 290v1M211.5 289v2M212.5 291v2M213.5 293v1M214.5 292v2M215.5 291v2M216.5 293v1M217.5 293v1M218.5 294v1M219.5 294v2M220.5 296v2M221.5 297v1M222.5 298v1M223.5 299v1M224.5 298v1M225.5 297v3M226.5 300v3M227.5 301v2M228.5 300v3M229.5 303v3M230.5 304v1M231.5 303v3M232.5 306v3M233.5 307v3M234.5 310v2M235.5 309v2M236.5 308v1M237.5 307v1M238.5 306v1M239.5 307v2M240.5 309v4M241.5 313v3M242.5 316v2M243.5 316v1M244.5 317v1M245.5 317v2M246.5 315v3M247.5 318v2M248.5 320v3M249.5 323v3M250.5 326v1M251.5 326v1M252.5 326v1M253.5 327v1M254.5 327v2M255.5 329v2M256.5 330v2M257.5 331v2M258.5 330v1M259.5 330v3M260.5 333v4M261.5 337v2M262.5 338v3M263.5 341v3M264.5 341v2M265.5 340v2M266.5 342v1M267.5 342v4M268.5 346v3M269.5 345v2M270.5 344v3M271.5 347v4M272.5 351v3M273.5 354v1M274.5 354v2M275.5 356v2M276.5 357v2M277.5 359v2M278.5 358v2M279.5 360v1M280.5 359v3M281.5 362v2M282.5 362v3M283.5 365v2M284.5 367v1M285.5 367v1M286.5 368v1M287.5 369v3M288.5 372v2M289.5 372v1M290.5 373v1M291.5 373v3M292.5 376v2M293.5 376v1M294.5 376v2M295.5 378v2M296.5 378v1M297.5 379v2M298.5 381v2M299.5 383v3M300.5 386v2M301.5 388v1M302.5 387v2M303.5 389v2M304.5 391v1M305.5 392v1M306.5 392v1M307.5 392v2M308.5 394v1M309.5 395v3M310.5 398v2M311.5 399v1M312.5 400v2M313.5 402v2M314.5 403v1M315.5 403v2M316.5 405v1M317.5 404v1M318.5 404v2M319.5 406v2M320.5 408v1M321.5 408v1M322.5 408v1M323.5 409v1M324.5 410v1M325.5 411v1M326.5 412v1M327.5 413v1M328.5 414v1M329.5 414v2M330.5 416v1M331.5 415v1M332.5 416v1M333.5 416v1M334.5 417v1M335.5 417v2M336.5 419v1M337.5 419v1M338.5 420v2M339.5 422v1M340.5 422v1M341.5 423v1M342.5 422v2M343.5 421v1M344.5 422v1M345.5 422v1M346.5 423v1M347.5 424v1M348.5 424v1M349.5 425v1M350.5 425v1M351.5 424v1M352.5 425v1M353.5 426v1M354.5 427v1M355.5 427v1M356.5 428v1M357.5 427v1M358.5 428v1M359.5 429v1M360.5 430v1M361.5 431v1M362.5 431v1M363.5 432v1M364.5 433v1M365.5 432v1M366.5 433v1M367.5 433v1M368.5 434v1M369.5 434v1M370.5 435v1M371.5 435v1M372.5 436v1M373.5 436v1M374.5 437v1M375.5 437v1M376.5 438v1M377.5 439v1M378.5 439v1M379.5 439v1M380.5 440v1M381.5 440v1M382.5 440v1M383.5 441v1M384.5 442v1M385.5 441v1M386.5 442v1M387.5 443v1M388.5 444v1M389.5 443v1M390.5 443v2M391.5 445v1M392.5 444v1M393.5 444v1M394.5 445v1M395.5 445v1M396.5 445v1M397.5 446v1M398.5 446v1M399.5 447v1M400.5 448v1M401.5 448v1M402.5 448v1M403.5 449v1M404.5 449v1M405.5 450v1M406.5 450v1M407.5 450v1M408.5 451v1M409.5 451v1M410.5 452v1M411.5 453v1M412.5 452v1M413.5 453v1M414.5 454v1M415.5 455v1M416.5 455v1M417.5 455v1M418.5 455v1M419.5 456v1M420.5 456v1M421.5 457v1M422.5 457v1M423.5 458v1M424.5 458v1M425.5 458v1M426.5 459v1M427.5 459v1M428.5 460v1M429.5 459v1M430.5 460v1M431.5 461v1M432.5 461v1M433.5 461v1M434.5 461v1M435.5 462v1M436.5 462v1M437.5 463v1M438.5 460v4M439.5 457v4M440.5 461v4M441.5 464v1M442.5 465v1M443.5 465v1M444.5 465v1M445.5 466v1M446.5 466v1M447.5 466v1M448.5 466v1M449.5 467v1M450.5 467v1M451.5 468v1M452.5 468v1M453.5 468v1M454.5 468v1M455.5 468v1M456.5 468v1M457.5 469v1M458.5 469v1M459.5 469v1M460.5 469v1M461.5 469v1M462.5 470v1M463.5 470v1M464.5 470v1M465.5 470v1M466.5 470v1M467.5 470v1M468.5 470v1M469.5 471v1M470.5 471v1M471.5 471v1M472.5 472v1M473.5 472v1M474.5 472v1M475.5 472v1M476.5 473v1M477.5 473v1M478.5 473v1M479.5 474v1M480.5 474v1M481.5 474v1M482.5 474v1M483.5 475v1M484.5 475v1M485.5 475v1M486.5 475v1M487.5 475v1M488.5 475v1M489.5 476v1M490.5 476v1M491.5 476v1M492.5 477v1M493.5 477v1M494.5 477v1M495.5 477v1M496.5 477v1M497.5 478v1M498.5 478v1M499.5 478v1M500.5 478v1M501.5 478v1M502.5 479v1M503.5 479v1M504.5 477v3M505.5 475v3M506.5 478v2M507.5 480v1M508.5 480v1M509.5 481v1M510.5 480v1M511.5 480v1M512.5 480v1M513.5 481v1M514.5 481v1M515.5 481v1M516.5 481v1M517.5 481v1M518.5 481v1M519.5 482v1M520.5 482v1M521.5 483v1M522.5 483v1M523.5 483v1M524.5 483v1M525.5 484v1M526.5 484v1M527.5 484v1M528.5 484v1M529.5 484v1M530.5 484v1M531.5 484v1M532.5 485v1M533.5 485v1M534.5 485v1M535.5 486v1M536.5 486v1M537.5 486v1M538.5 487v1M539.5 487v1M540.5 487v1M541.5 487v1M542.5 487v1M543.5 487v1M544.5 487v1M545.5 488v1M546.5 488v1M547.5 488v1M548.5 488v1M549.5 489v1M550.5 489v1M551.5 489v1M552.5 489v1M553.5 490v1M554.5 490v1M555.5 490v1M556.5 490v1M557.5 491v1M558.5 491v1M559.5 491v1M560.5 491v1M561.5 491v1M562.5 491v1M563.5 491v1M564.5 491v1M565.5 491v1M566.5 492v1M567.5 492v1M568.5 493v1M569.5 493v1M570.5 493v1M571.5 494v1M572.5 494v1M573.5 494v1M574.5 494v1M575.5 493v1M576.5 494v1M577.5 494v1M578.5 494v1M579.5 494v1M580.5 494v1M581.5 495v1M582.5 495v1M583.5 495v1M584.5 495v1M585.5 495v1M586.5 494v3M587.5 492v3M588.5 495v2M589.5 496v1M590.5 497v1M591.5 497v1M592.5 496v2M593.5 498v1M594.5 497v1M595.5 497v1M596.5 498v1M597.5 498v1M598.5 498v1M599.5 498v1M600.5 498v1M601.5 497v3M602.5 495v3M603.5 498v2M604.5 499v1M605.5 499v1M606.5 499v1M607.5 500v1M608.5 499v1M609.5 499v1M610.5 499v1M611.5 500v1M612.5 500v1M613.5 500v2M614.5 498v2M615.5 500v2M616.5 502v1M617.5 501v1M618.5 501v1M619.5 502v1M620.5 502v1M621.5 502v1M622.5 503v1M623.5 502v1M624.5 503v1M625.5 502v1M626.5 503v1M627.5 503v1M628.5 503v1M629.5 504v1M630.5 503v1M631.5 504v1M632.5 504v1M633.5 504v1M634.5 504v1M635.5 504v1M636.5 504v1M637.5 505v1M638.5 505v1M639.5 505v1M640.5 505v1M641.5 505v1M642.5 505v1M643.5 505v1M644.5 505v1M645.5 505v1M646.5 506v1M647.5 506v1M648.5 505v1M649.5 505v1M650.5 506v1M651.5 506v1M652.5 506v1M653.5 506v1M654.5 506v1M655.5 506v1M656.5 506v1M657.5 507v1M658.5 507v1M659.5 507v1M660.5 507v1M661.5 507v1M662.5 508v1M663.5 508v1M664.5 508v1M665.5 508v1M666.5 508v1M667.5 508v1M668.5 509v1M669.5 509v1M670.5 509v1M671.5 509v1M672.5 509v1M673.5 509v1M674.5 510v1M675.5 510v1M676.5 510v1M677.5 510v1M678.5 510v1M679.5 510v1M680.5 511v1M681.5 511v1M682.5 511v1M683.5 510v1M684.5 511v1M685.5 511v1M686.5 511v1M687.5 512v1M688.5 511v1M689.5 511v1M690.5 511v1M691.5 512v1M692.5 512v1M693.5 511v1M694.5 512v1M695.5 512v1M696.5 512v1M697.5 513v1M698.5 514v1M699.5 514v1M700.5 515v1M701.5 515v1M702.5 515v1M703.5 516v1M704.5 516v1M705.5 516v1M706.5 517v1M707.5 517v1M708.5 518v1M709.5 518v1M710.5 519v1M711.5 519v1M712.5 520v1M713.5 520v1M714.5 520v1M715.5 521v1M716.5 522v1M717.5 522v1M718.5 523v1M719.5 523v1M720.5 523v1M721.5 524v1M722.5 525v1M723.5 526v1M724.5 526v1M725.5 526v1M726.5 527v1M727.5 527v1M728.5 528v1M729.5 529v1M730.5 529v1M731.5 530v1M732.5 530v1M733.5 531v1M734.5 531v1M735.5 532v1M736.5 533v1M737.5 533v1M738.5 534v1M739.5 534v1M740.5 535v1M741.5 535v1M742.5 536v1M743.5 537v1M744.5 537v1M745.5 538v1M746.5 538v1M747.5 539v1M748.5 539v1M749.5 540v1M750.5 541v1M751.5 541v1M752.5 542v1M753.5 542v1M754.5 543v1M755.5 543v1M756.5 544v1M757.5 544v1M758.5 544v1M759.5 545v1M760.5 545v1M761.5 546v1M762.5 546v1M763.5 546v1M764.5 547v1M765.5 547v1M766.5 548v1M767.5 548v1M768.5 549v1M769.5 549v1M770.5 549v1M771.5 549v1M772.5 550v1M773.5 550v1M774.5 550v1M775.5 550v1M776.5 550v1M777.5 551v1M778.5 551v1M779.5 551v1M780.5 551v1M781.5 551v1M782.5 551v1M783.5 551v1M784.5 552v1M785.5 552v1M786.5 552v1M787.5 552v1M788.5 552v1M789.5 552v1M790.5 552v1M791.5 552v1M792.5 552v1M793.5 553v1M794.5 553v1M795.5 553v1M796.5 553v1M797.5 553v1M798.5 553v1M799.5 553v1M800.5 553v1M801.5 554v1M802.5 553v1M803.5 553v1M804.5 553v1M805.5 552v2M806.5 550v2M807.5 552v2M808.5 553v1M809.5 553v1M810.5 554v1M811.5 553v1M812.5 553v1M813.5 553v1M814.5 553v1M815.5 553v1M816.5 554v1M817.5 553v1M818.5 553v1M819.5 554v1M820.5 553v1M821.5 553v1M822.5 553v1M823.5 553v1M824.5 553v1M825.5 553v1M826.5 553v1M827.5 553v1M828.5 553v1M829.5 553v1M830.5 554v1M831.5 554v1M832.5 554v1M833.5 554v1M834.5 553v1M835.5 553v1M836.5 554v1M837.5 553v1M838.5 554v1M839.5 554v1M840.5 554v1M841.5 554v1M842.5 553v1M843.5 553v1M844.5 553v1M845.5 553v1M846.5 554v1M847.5 554v1M848.5 554v1M849.5 554v1M850.5 553v1M851.5 554v1M852.5 553v1M853.5 554v1M854.5 553v1M855.5 554v1M856.5 554v1M857.5 554v1" stroke="#0000ff" stroke-width="1" fill="none" stroke-linejoin="round" shape-rendering="crispEdges"/><path d="M72.5 253v2M73.5 251v2M74.5 253v2M75.5 252v1M76.5 252v1M77.5 252v2M78.5 254v1M79.5 254v2M80.5 256v2M81.5 258v1M82.5 257v3M83.5 255v2M84.5 254v3M85.5 252v3M86.5 254v3M87.5 251v3M88.5 253v2M89.5 255v4M90.5 259v3M91.5 260v1M92.5 259v2M93.5 261v1M94.5 262v1M95.5 262v1M96.5 263v1M97.5 263v2M98.5 265v4M99.5 268v3M100.5 265v3M101.5 264v2M102.5 263v1M103.5 263v1M104.5 262v2M105.5 264v3M106.5 267v2M107.5 267v2M108.5 266v2M109.5 268v2M110.5 266v2M111.5 267v1M112.5 267v1M113.5 266v1M114.5 264v2M115.5 263v3M116.5 266v3M117.5 269v1M118.5 268v2M119.5 267v3M120.5 270v3M121.5 273v1M122.5 272v3M123.5 275v3M124.5 275v1M125.5 275v1M126.5 275v1M127.5 274v2M128.5 275v2M129.5 274v1M130.5 274v1M131.5 275v3M132.5 278v3M133.5 278v3M134.5 276v2M135.5 278v1M136.5 278v1M137.5 278v2M138.5 277v1M139.5 278v5M140.5 283v4M141.5 284v1M142.5 285v1M143.5 285v1M144.5 285v1M145.5 284v2M146.5 285v2M147.5 283v2M148.5 282v1M149.5 282v3M150.5 285v2M151.5 282v3M152.5 281v3M153.5 284v3M154.5 286v2M155.5 285v2M156.5 287v1M157.5 288v1M158.5 288v1M159.5 288v2M160.5 290v2M161.5 291v1M162.5 290v2M163.5 292v1M164.5 291v2M165.5 290v1M166.5 290v1M167.5 291v1M168.5 292v2M169.5 294v2M170.5 293v3M171.5 290v3M172.5 288v2M173.5 288v3M174.5 291v2M175.5 292v3M176.5 295v2M177.5 296v2M178.5 298v2M179.5 300v1M180.5 300v1M181.5 300v2M182.5 298v2M183.5 299v2M184.5 298v2M185.5 300v1M186.5 300v1M187.5 301v1M188.5 300v2M189.5 302v1M190.5 301v2M191.5 301v3M192.5 299v2M193.5 301v2M194.5 303v2M195.5 304v2M196.5 302v2M197.5 302v1M198.5 302v2M199.5 304v2M200.5 306v1M201.5 305v2M202.5 306v3M203.5 304v2M204.5 304v1M205.5 305v2M206.5 307v2M207.5 308v1M208.5 308v1M209.5 307v3M210.5 310v3M211.5 313v2M212.5 315v1M213.5 314v1M214.5 313v2M215.5 312v1M216.5 312v2M217.5 314v2M218.5 316v1M219.5 316v1M220.5 315v1M221.5 314v2M222.5 316v1M223.5 317v3M224.5 320v3M225.5 321v3M226.5 324v3M227.5 322v2M228.5 324v2M229.5 326v1M230.5 325v1M231.5 324v1M232.5 324v2M233.5 326v2M234.5 328v2M235.5 330v3M236.5 333v3M237.5 332v4M238.5 336v3M239.5 334v2M240.5 334v2M241.5 333v3M242.5 336v2M243.5 336v1M244.5 336v1M245.5 336v1M246.5 336v2M247.5 338v4M248.5 342v3M249.5 342v3M250.5 345v2M251.5 346v1M252.5 346v1M253.5 346v1M254.5 346v2M255.5 348v4M256.5 352v2M257.5 350v3M258.5 353v3M259.5 356v1M260.5 357v1M261.5 356v3M262.5 359v2M263.5 360v1M264.5 359v3M265.5 362v2M266.5 360v2M267.5 360v4M268.5 364v4M269.5 366v1M270.5 367v1M271.5 368v2M272.5 370v2M273.5 372v2M274.5 374v2M275.5 374v2M276.5 376v1M277.5 376v3M278.5 379v2M279.5 379v1M280.5 380v1M281.5 381v2M282.5 383v3M283.5 386v2M284.5 388v1M285.5 389v2M286.5 391v2M287.5 392v2M288.5 394v1M289.5 393v1M290.5 394v1M291.5 395v2M292.5 397v1M293.5 397v2M294.5 399v3M295.5 402v1M296.5 403v1M297.5 403v1M298.5 402v2M299.5 404v1M300.5 404v2M301.5 406v3M302.5 409v1M303.5 408v2M304.5 410v1M305.5 411v2M306.5 413v2M307.5 415v1M308.5 415v2M309.5 417v3M310.5 420v1M311.5 419v1M312.5 420v1M313.5 421v1M314.5 422v2M315.5 424v1M316.5 424v2M317.5 426v2M318.5 428v2M319.5 430v1M320.5 430v1M321.5 430v1M322.5 431v1M323.5 432v1M324.5 432v1M325.5 432v2M326.5 434v2M327.5 435v1M328.5 435v1M329.5 436v1M330.5 436v1M331.5 437v1M332.5 437v1M333.5 438v2M334.5 440v1M335.5 440v1M336.5 441v1M337.5 441v1M338.5 441v1M339.5 442v1M340.5 443v1M341.5 443v1M342.5 444v1M343.5 443v2M344.5 445v1M345.5 445v1M346.5 446v1M347.5 446v1M348.5 446v1M349.5 446v1M350.5 447v1M351.5 448v1M352.5 448v1M353.5 448v1M354.5 448v1M355.5 449v1M356.5 448v1M357.5 448v1M358.5 449v2M359.5 451v1M360.5 451v1M361.5 452v2M362.5 454v1M363.5 453v1M364.5 454v1M365.5 455v1M366.5 456v1M367.5 455v1M368.5 455v1M369.5 456v1M370.5 456v1M371.5 456v1M372.5 457v1M373.5 457v1M374.5 458v1M375.5 459v1M376.5 459v1M377.5 459v1M378.5 460v2M379.5 462v1M380.5 462v1M381.5 462v1M382.5 462v1M383.5 462v1M384.5 463v1M385.5 463v1M386.5 463v1M387.5 464v1M388.5 464v1M389.5 464v1M390.5 465v1M391.5 465v1M392.5 466v1M393.5 467v1M394.5 467v1M395.5 468v1M396.5 468v1M397.5 469v1M398.5 468v1M399.5 468v1M400.5 469v1M401.5 469v1M402.5 470v1M403.5 471v1M404.5 472v1M405.5 472v1M406.5 472v1M407.5 472v1M408.5 472v1M409.5 473v2M410.5 475v1M411.5 474v1M412.5 474v1M413.5 475v1M414.5 475v1M415.5 476v1M416.5 476v1M417.5 477v1M418.5 477v1M419.5 477v1M420.5 478v1M421.5 478v1M422.5 478v1M423.5 479v1M424.5 479v1M425.5 479v1M426.5 480v1M427.5 480v1M428.5 481v1M429.5 481v1M430.5 481v1M431.5 482v1M432.5 482v1M433.5 482v1M434.5 483v1M435.5 483v1M436.5 484v1M437.5 485v1M438.5 482v4M439.5 479v4M440.5 483v3M441.5 486v1M442.5 487v1M443.5 486v1M444.5 487v1M445.5 488v1M446.5 488v1M447.5 488v1M448.5 488v1M449.5 489v1M450.5 489v1M451.5 489v1M452.5 489v1M453.5 489v1M454.5 489v1M455.5 489v1M456.5 490v1M457.5 490v1M458.5 490v1M459.5 490v1M460.5 491v1M461.5 491v1M462.5 491v1M463.5 491v1M464.5 491v1M465.5 491v1M466.5 491v1M467.5 492v1M468.5 492v1M469.5 492v1M470.5 492v1M471.5 492v1M472.5 493v1M473.5 493v1M474.5 493v1M475.5 493v1M476.5 494v1M477.5 493v1M478.5 494v1M479.5 494v1M480.5 494v1M481.5 494v1M482.5 495v1M483.5 495v1M484.5 495v1M485.5 495v1M486.5 495v1M487.5 495v1M488.5 496v1M489.5 496v1M490.5 496v1M491.5 497v1M492.5 497v1M493.5 497v1M494.5 497v1M495.5 497v1M496.5 498v1M497.5 498v1M498.5 498v1M499.5 498v1M500.5 499v1M501.5 499v1M502.5 499v1M503.5 499v1M504.5 498v2M505.5 496v3M506.5 499v2M507.5 500v1M508.5 500v1M509.5 501v1M510.5 501v1M511.5 501v1M512.5 501v1M513.5 501v1M514.5 501v1M515.5 502v1M516.5 502v1M517.5 502v1M518.5 502v1M519.5 502v1M520.5 503v1M521.5 502v1M522.5 503v1M523.5 503v1M524.5 503v1M525.5 503v1M526.5 503v1M527.5 503v1M528.5 504v1M529.5 504v1M530.5 504v1M531.5 504v1M532.5 504v1M533.5 504v1M534.5 504v1M535.5 504v1M536.5 505v1M537.5 505v1M538.5 505v1M539.5 506v1M540.5 506v1M541.5 506v1M542.5 506v1M543.5 506v1M544.5 507v1M545.5 506v1M546.5 507v1M547.5 507v1M548.5 507v1M549.5 507v1M550.5 508v1M551.5 508v1M552.5 509v1M553.5 508v1M554.5 509v1M555.5 509v1M556.5 509v1M557.5 509v1M558.5 509v1M559.5 510v1M560.5 510v1M561.5 510v1M562.5 510v1M563.5 510v1M564.5 510v1M565.5 510v1M566.5 510v1M567.5 511v1M568.5 511v1M569.5 511v1M570.5 511v1M571.5 511v1M572.5 512v1M573.5 512v1M574.5 512v1M575.5 512v1M576.5 512v1M577.5 513v1M578.5 513v1M579.5 513v1M580.5 513v1M581.5 513v1M582.5 514v1M583.5 514v1M584.5 514v1M585.5 514v1M586.5 512v3M587.5 510v3M588.5 513v2M589.5 514v1M590.5 514v1M591.5 515v1M592.5 515v1M593.5 515v1M594.5 515v1M595.5 515v1M596.5 515v1M597.5 515v1M598.5 516v1M599.5 516v1M600.5 516v1M601.5 515v2M602.5 513v2M603.5 515v2M604.5 516v1M605.5 517v1M606.5 516v1M607.5 517v1M608.5 517v1M609.5 517v1M610.5 517v1M611.5 518v1M612.5 518v1M613.5 516v3M614.5 514v3M615.5 517v2M616.5 518v1M617.5 518v1M618.5 518v1M619.5 519v1M620.5 519v1M621.5 519v1M622.5 519v1M623.5 519v1M624.5 519v1M625.5 519v1M626.5 519v1M627.5 519v1M628.5 519v1M629.5 519v1M630.5 519v1M631.5 520v1M632.5 520v1M633.5 520v1M634.5 520v1M635.5 520v1M636.5 521v1M637.5 521v1M638.5 521v1M639.5 521v1M640.5 521v1M641.5 521v1M642.5 521v1M643.5 521v1M644.5 521v1M645.5 522v1M646.5 522v1M647.5 522v1M648.5 522v1M649.5 522v1M650.5 523v1M651.5 523v1M652.5 523v1M653.5 523v1M654.5 523v1M655.5 523v1M656.5 523v1M657.5 523v1M658.5 523v1M659.5 523v1M660.5 523v1M661.5 524v1M662.5 523v1M663.5 524v1M664.5 524v1M665.5 524v1M666.5 524v1M667.5 524v1M668.5 524v1M669.5 524v1M670.5 524v1M671.5 523v1M672.5 524v1M673.5 524v1M674.5 524v1M675.5 525v1M676.5 525v1M677.5 525v1M678.5 525v1M679.5 525v1M680.5 526v1M681.5 525v1M682.5 526v1M683.5 526v1M684.5 526v1M685.5 525v1M686.5 526v1M687.5 526v1M688.5 526v1M689.5 526v1M690.5 526v1M691.5 526v1M692.5 526v1M693.5 526v1M694.5 527v1M695.5 527v1M696.5 527v1M697.5 528v1M698.5 528v1M699.5 528v1M700.5 528v1M701.5 529v1M702.5 529v1M703.5 529v1M704.5 529v1M705.5 530v1M706.5 530v1M707.5 530v1M708.5 530v1M709.5 531v1M710.5 531v1M711.5 531v1M712.5 531v1M713.5 531v1M714.5 531v1M715.5 531v1M716.5 532v1M717.5 531v1M718.5 531v1M719.5 531v1M720.5 531v1M721.5 531v1M722.5 531v1M723.5 531v1M724.5 531v1M725.5 531v1M726.5 531v1M727.5 531v1M728.5 531v1M729.5 531v1M730.5 532v1M731.5 531v1M732.5 531v1M733.5 531v1M734.5 532v1M735.5 531v1M736.5 532v1M737.5 532v1M738.5 532v1M739.5 532v1M740.5 532v1M741.5 531v1M742.5 532v1M743.5 532v1M744.5 532v1M745.5 531v1M746.5 531v1M747.5 531v1M748.5 531v1M749.5 531v1M750.5 531v1M751.5 532v1M752.5 531v1M753.5 531v1M754.5 531v1M755.5 531v1M756.5 531v1M757.5 531v1M758.5 531v1M759.5 531v1M760.5 531v1M761.5 531v1M762.5 532v1M763.5 531v1M764.5 531v1M765.5 531v1M766.5 531v1M767.5 531v1M768.5 532v1M769.5 532v1M770.5 531v1M771.5 531v1M772.5 531v1M773.5 531v1M774.5 531v1M775.5 531v1M776.5 531v1M777.5 531v1M778.5 531v1M779.5 531v1M780.5 531v1M781.5 532v1M782.5 532v1M783.5 532v1M784.5 532v1M785.5 532v1M786.5 532v1M787.5 532v1M788.5 532v1M789.5 531v1M790.5 531v1M791.5 531v1M792.5 531v1M793.5 531v1M794.5 531v1M795.5 531v1M796.5 531v1M797.5 531v1M798.5 531v1M799.5 531v1M800.5 531v1M801.5 531v1M802.5 531v1M803.5 531v1M804.5 531v1M805.5 531v1M806.5 531v1M807.5 531v1M808.5 531v1M809.5 531v1M810.5 531v1M811.5 531v1M812.5 531v1M813.5 531v1M814.5 531v1M815.5 531v1M816.5 531v1M817.5 531v1M818.5 531v1M819.5 531v1M820.5 531v1M821.5 531v1M822.5 531v1M823.5 531v1M824.5 531v1M825.5 531v1M826.5 532v1M827.5 531v1M828.5 531v1M829.5 531v1M830.5 531v1M831.5 531v1M832.5 531v1M833.5 531v1M834.5 531v1M835.5 531v1M836.5 531v1M837.5 531v1M838.5 531v1M839.5 532v1M840.5 531v1M841.5 531v1M842.5 531v1M843.5 531v1M844.5 531v1M845.5 531v1M846.5 531v1M847.5 531v1M848.5 531v1M849.5 531v1M850.5 531v1M851.5 531v1M852.5 531v1M853.5 531v1M854.5 531v1M855.5 531v1M856.5 531v1M857.5 531v1" stroke="#0000ff" stroke-width="1" fill="none" stroke-linejoin="round" shape-rendering="crispEdges"/><path d="M72.5 275v1M73.5 274v1M74.5 274v1M75.5 273v3M76.5 276v2M77.5 277v2M78.5 276v1M79.5 276v1M80.5 275v2M81.5 273v2M82.5 274v1M83.5 273v3M84.5 276v3M85.5 279v1M86.5 278v2M87.5 280v2M88.5 281v1M89.5 282v1M90.5 281v2M91.5 279v2M92.5 279v3M93.5 282v3M94.5 285v2M95.5 287v1M96.5 286v2M97.5 285v1M98.5 286v1M99.5 285v3M100.5 288v2M101.5 286v2M102.5 285v1M103.5 285v1M104.5 286v2M105.5 288v2M106.5 289v2M107.5 288v1M108.5 288v1M109.5 289v1M110.5 288v3M111.5 290v3M112.5 288v2M113.5 287v2M114.5 285v2M115.5 285v4M116.5 289v4M117.5 293v1M118.5 293v2M119.5 295v1M120.5 295v1M121.5 295v1M122.5 296v1M123.5 295v1M124.5 294v2M125.5 296v4M126.5 300v2M127.5 296v4M128.5 294v2M129.5 294v2M130.5 296v2M131.5 297v3M132.5 300v2M133.5 300v2M134.5 299v2M135.5 301v1M136.5 300v2M137.5 302v2M138.5 303v1M139.5 304v1M140.5 303v1M141.5 302v3M142.5 305v3M143.5 308v2M144.5 306v2M145.5 305v2M146.5 307v2M147.5 307v2M148.5 306v2M149.5 308v2M150.5 310v2M151.5 312v1M152.5 312v2M153.5 314v2M154.5 313v1M155.5 312v1M156.5 312v2M157.5 311v1M158.5 311v1M159.5 312v1M160.5 313v1M161.5 313v1M162.5 314v1M163.5 314v1M164.5 314v2M165.5 316v3M166.5 319v1M167.5 319v2M168.5 317v2M169.5 314v3M170.5 312v3M171.5 315v3M172.5 317v2M173.5 315v2M174.5 317v2M175.5 316v1M176.5 316v1M177.5 315v2M178.5 314v3M179.5 317v3M180.5 320v1M181.5 321v2M182.5 323v2M183.5 324v1M184.5 323v1M185.5 324v2M186.5 326v1M187.5 326v2M188.5 325v2M189.5 325v3M190.5 323v2M191.5 324v1M192.5 323v2M193.5 325v3M194.5 328v2M195.5 328v1M196.5 328v1M197.5 327v2M198.5 329v2M199.5 330v1M200.5 329v2M201.5 328v1M202.5 329v2M203.5 331v1M204.5 332v1M205.5 332v2M206.5 330v2M207.5 328v3M208.5 326v3M209.5 329v4M210.5 333v3M211.5 331v2M212.5 332v2M213.5 334v2M214.5 335v1M215.5 335v1M216.5 334v1M217.5 333v3M218.5 336v3M219.5 339v2M220.5 340v1M221.5 341v1M222.5 342v2M223.5 344v2M224.5 343v1M225.5 343v2M226.5 344v2M227.5 343v3M228.5 346v4M229.5 350v1M230.5 350v1M231.5 350v1M232.5 350v2M233.5 348v2M234.5 348v3M235.5 346v2M236.5 348v2M237.5 348v3M238.5 351v4M239.5 355v1M240.5 356v1M241.5 355v1M242.5 355v2M243.5 357v3M244.5 360v4M245.5 364v3M246.5 361v3M247.5 362v2M248.5 364v2M249.5 365v2M250.5 364v3M251.5 367v2M252.5 369v2M253.5 371v2M254.5 373v3M255.5 376v2M256.5 377v2M257.5 375v2M258.5 375v2M259.5 376v2M260.5 374v2M261.5 376v4M262.5 380v3M263.5 378v4M264.5 382v4M265.5 386v1M266.5 386v1M267.5 386v3M268.5 389v2M269.5 388v1M270.5 388v2M271.5 390v1M272.5 391v2M273.5 393v2M274.5 395v2M275.5 394v1M276.5 394v2M277.5 396v2M278.5 397v2M279.5 399v2M280.5 401v1M281.5 402v2M282.5 404v2M283.5 406v2M284.5 407v2M285.5 406v1M286.5 407v2M287.5 409v2M288.5 411v2M289.5 413v1M290.5 414v1M291.5 413v2M292.5 415v2M293.5 417v3M294.5 420v2M295.5 422v1M296.5 423v1M297.5 424v1M298.5 424v1M299.5 425v2M300.5 427v3M301.5 430v2M302.5 432v1M303.5 432v1M304.5 433v1M305.5 432v2M306.5 434v1M307.5 435v2M308.5 437v2M309.5 439v1M310.5 440v2M311.5 442v1M312.5 443v1M313.5 443v2M314.5 445v1M315.5 446v1M316.5 446v1M317.5 447v1M318.5 448v1M319.5 449v2M320.5 451v2M321.5 453v1M322.5 454v1M323.5 454v1M324.5 454v1M325.5 454v1M326.5 455v1M327.5 455v2M328.5 457v1M329.5 457v1M330.5 456v1M331.5 457v1M332.5 458v1M333.5 458v2M334.5 460v1M335.5 460v1M336.5 459v1M337.5 459v2M338.5 461v2M339.5 463v1M340.5 463v1M341.5 464v1M342.5 465v1M343.5 465v1M344.5 466v1M345.5 466v1M346.5 466v2M347.5 468v1M348.5 467v1M349.5 467v1M350.5 467v1M351.5 468v1M352.5 469v1M353.5 469v1M354.5 469v1M355.5 469v1M356.5 470v1M357.5 471v1M358.5 472v1M359.5 472v1M360.5 472v1M361.5 473v1M362.5 473v1M363.5 474v1M364.5 475v1M365.5 474v1M366.5 475v1M367.5 475v1M368.5 475v1M369.5 476v1M370.5 476v1M371.5 477v1M372.5 478v1M373.5 478v1M374.5 479v1M375.5 479v1M376.5 479v1M377.5 479v1M378.5 480v1M379.5 480v2M380.5 482v1M381.5 482v1M382.5 481v1M383.5 481v1M384.5 482v1M385.5 483v1M386.5 483v1M387.5 483v1M388.5 483v1M389.5 483v1M390.5 484v1M391.5 484v1M392.5 485v1M393.5 486v1M394.5 486v1M395.5 486v1M396.5 487v1M397.5 487v1M398.5 488v1M399.5 489v1M400.5 489v1M401.5 489v1M402.5 490v1M403.5 490v1M404.5 490v1M405.5 489v1M406.5 490v1M407.5 490v1M408.5 491v1M409.5 491v1M410.5 491v1M411.5 492v1M412.5 492v1M413.5 493v1M414.5 493v1M415.5 494v1M416.5 495v1M417.5 496v1M418.5 496v1M419.5 496v1M420.5 496v1M421.5 496v1M422.5 497v1M423.5 498v1M424.5 498v1M425.5 498v1M426.5 498v1M427.5 499v1M428.5 499v1M429.5 499v1M430.5 499v1M431.5 500v1M432.5 500v1M433.5 500v1M434.5 501v1M435.5 501v1M436.5 502v1M437.5 502v1M438.5 499v4M439.5 496v4M440.5 500v4M441.5 503v1M442.5 503v1M443.5 504v1M444.5 504v1M445.5 504v1M446.5 504v1M447.5 504v1M448.5 505v1M449.5 505v1M450.5 505v1M451.5 505v1M452.5 506v1M453.5 507v1M454.5 507v1M455.5 507v1M456.5 506v1M457.5 506v1M458.5 506v1M459.5 507v1M460.5 507v1M461.5 507v1M462.5 507v1M463.5 507v1M464.5 507v1M465.5 507v1M466.5 508v1M467.5 508v1M468.5 508v1M469.5 509v1M470.5 509v1M471.5 509v1M472.5 509v1M473.5 509v1M474.5 509v1M475.5 509v1M476.5 509v1M477.5 509v1M478.5 510v1M479.5 510v1M480.5 510v1M481.5 510v1M482.5 510v1M483.5 511v1M484.5 511v1M485.5 511v1M486.5 511v1M487.5 511v1M488.5 512v1M489.5 512v1M490.5 512v1M491.5 511v1M492.5 512v1M493.5 512v1M494.5 513v1M495.5 513v1M496.5 513v1M497.5 513v1M498.5 513v1M499.5 513v1M500.5 513v1M501.5 513v1M502.5 513v1M503.5 513v1M504.5 512v3M505.5 510v3M506.5 513v2M507.5 514v1M508.5 514v1M509.5 515v1M510.5 515v1M511.5 514v1M512.5 514v1M513.5 515v1M514.5 515v1M515.5 515v1M516.5 515v1M517.5 516v1M518.5 516v1M519.5 516v1M520.5 516v1M521.5 516v1M522.5 516v1M523.5 517v1M524.5 516v1M525.5 516v1M526.5 516v1M527.5 517v1M528.5 517v1M529.5 517v1M530.5 517v1M531.5 517v1M532.5 517v1M533.5 517v1M534.5 517v1M535.5 517v1M536.5 517v1M537.5 518v1M538.5 518v1M539.5 519v1M540.5 519v1M541.5 519v1M542.5 519v1M543.5 519v1M544.5 519v1M545.5 519v1M546.5 519v1M547.5 519v1M548.5 519v1M549.5 519v1M550.5 520v1M551.5 520v1M552.5 520v1M553.5 521v1M554.5 521v1M555.5 521v1M556.5 521v1M557.5 521v1M558.5 521v1M559.5 521v1M560.5 521v1M561.5 521v1M562.5 521v1M563.5 521v1M564.5 522v1M565.5 522v1M566.5 522v1M567.5 522v1M568.5 522v1M569.5 522v1M570.5 522v1M571.5 522v1M572.5 523v1M573.5 523v1M574.5 523v1M575.5 523v1M576.5 523v1M577.5 523v1M578.5 523v1M579.5 523v1M580.5 524v1M581.5 524v1M582.5 523v1M583.5 523v1M584.5 523v1M585.5 523v1M586.5 522v2M587.5 520v3M588.5 523v2M589.5 524v1M590.5 523v1M591.5 524v1M592.5 524v1M593.5 524v1M594.5 524v1M595.5 525v1M596.5 524v1M597.5 524v1M598.5 524v1M599.5 524v1M600.5 525v1M601.5 523v3M602.5 521v3M603.5 524v2M604.5 524v1M605.5 525v1M606.5 524v1M607.5 524v1M608.5 525v1M609.5 525v1M610.5 525v1M611.5 525v1M612.5 525v1M613.5 524v2M614.5 522v3M615.5 525v2M616.5 526v1M617.5 526v1M618.5 526v1M619.5 526v1M620.5 526v1M621.5 526v1M622.5 526v1M623.5 526v1M624.5 526v1M625.5 526v1M626.5 526v1M627.5 526v1M628.5 526v1M629.5 526v1M630.5 526v1M631.5 526v1M632.5 527v1M633.5 527v1M634.5 527v1M635.5 527v1M636.5 526v1M637.5 527v1M638.5 526v1M639.5 527v1M640.5 527v1M641.5 526v1M642.5 526v1M643.5 527v1M644.5 527v1M645.5 527v1M646.5 527v1M647.5 527v1M648.5 527v1M649.5 527v1M650.5 527v1M651.5 527v1M652.5 527v1M653.5 527v1M654.5 527v1M655.5 527v1M656.5 527v1M657.5 527v1M658.5 528v1M659.5 528v1M660.5 528v1M661.5 527v1M662.5 527v1M663.5 528v1M664.5 527v1M665.5 528v1M666.5 528v1M667.5 528v1M668.5 528v1M669.5 528v1M670.5 528v1M671.5 527v2M672.5 525v2M673.5 527v2M674.5 528v1M675.5 528v1M676.5 526v3M677.5 524v3M678.5 527v2M679.5 529v1M680.5 528v1M681.5 528v1M682.5 528v1M683.5 528v1M684.5 528v1M685.5 528v1M686.5 528v1M687.5 528v1M688.5 528v1M689.5 528v1M690.5 528v1M691.5 529v1M692.5 528v1M693.5 529v1M694.5 529v1M695.5 529v1M696.5 529v1M697.5 529v1M698.5 529v1M699.5 529v1M700.5 529v1M701.5 529v1M702.5 529v1M703.5 529v1M704.5 529v1M705.5 529v1M706.5 529v1M707.5 529v1M708.5 530v1M709.5 530v1M710.5 530v1M711.5 530v1M712.5 530v1M713.5 530v1M714.5 530v1M715.5 530v1M716.5 531v1M717.5 531v1M718.5 530v1M719.5 531v1M720.5 531v1M721.5 531v1M722.5 531v1M723.5 531v1M724.5 532v1M725.5 532v1M726.5 532v1M727.5 532v1M728.5 532v1M729.5 532v1M730.5 532v1M731.5 532v1M732.5 532v1M733.5 532v1M734.5 532v1M735.5 533v1M736.5 533v1M737.5 533v1M738.5 533v1M739.5 533v1M740.5 533v1M741.5 533v1M742.5 533v1M743.5 534v1M744.5 534v1M745.5 534v1M746.5 534v1M747.5 534v1M748.5 534v1M749.5 534v1M750.5 534v1M751.5 535v1M752.5 535v1M753.5 535v1M754.5 535v1M755.5 535v1M756.5 535v1M757.5 535v1M758.5 535v1M759.5 535v1M760.5 535v1M761.5 536v1M762.5 536v1M763.5 536v1M764.5 536v1M765.5 536v1M766.5 536v1M767.5 536v1M768.5 536v1M769.5 537v1M770.5 536v1M771.5 536v1M772.5 536v1M773.5 536v1M774.5 536v1M775.5 537v1M776.5 537v1M777.5 537v1M778.5 537v1M779.5 537v1M780.5 537v1M781.5 537v1M782.5 537v1M783.5 537v1M784.5 537v1M785.5 537v1M786.5 537v1M787.5 537v1M788.5 537v1M789.5 537v1M790.5 538v1M791.5 538v1M792.5 538v1M793.5 538v1M794.5 538v1M795.5 538v1M796.5 538v1M797.5 538v1M798.5 538v1M799.5 538v1M800.5 538v1M801.5 538v1M802.5 538v1M803.5 538v1M804.5 538v1M805.5 538v1M806.5 538v1M807.5 538v1M808.5 538v1M809.5 538v1M810.5 538v1M811.5 538v1M812.5 538v1M813.5 538v1M814.5 538v1M815.5 538v1M816.5 538v1M817.5 538v1M818.5 538v1M819.5 538v1M820.5 538v1M821.5 538v1M822.5 538v1M823.5 538v1M824.5 538v1M825.5 538v1M826.5 538v1M827.5 538v1M828.5 538v1M829.5 538v1M830.5 538v1M831.5 538v1M832.5 538v1M833.5 538v1M834.5 538v1M835.5 538v1M836.5 538v1M837.5 538v1M838.5 538v1M839.5 538v1M840.5 538v1M841.5 538v1M842.5 538v1M843.5 538v1M844.5 538v1M845.5 538v1M846.5 538v1M847.5 538v1M848.5 538v1M849.5 538v1M850.5 538v1M851.5 538v1M852.5 538v1M853.5 538v1M854.5 538v1M855.5 538v1M856.5 538v1M857.5 538v1" stroke="#0000ff" stroke-width="1" fill="none" stroke-linejoin="round" shape-rendering="crispEdges"/>
<path d="M196.5 244.5L192.5 257.5H200.5ZM196.5 263.5L192.5 276.5H200.5ZM196.5 283.5L192.5 296.5H200.5ZM196.5 303.0L192.5 316.0H200.5ZM196.5 327.5L192.5 340.5H200.5ZM321.5 371.0L317.5 384.0H325.5ZM321.5 389.0L317.5 402.0H325.5ZM321.5 410.0L317.5 423.0H325.5ZM321.5 431.0L317.5 444.0H325.5ZM321.5 453.0L317.5 466.0H325.5ZM445.5 423.0L441.5 436.0H449.5ZM445.5 444.0L441.5 457.0H449.5ZM445.5 466.0L441.5 479.0H449.5ZM445.5 487.5L441.5 500.5H449.5ZM445.5 505.0L441.5 518.0H449.5ZM570.5 451.5L566.5 464.5H574.5ZM570.5 472.0L566.5 485.0H574.5ZM570.5 493.1L566.5 506.1H574.5ZM570.5 512.0L566.5 525.0H574.5ZM570.5 522.8L566.5 535.8H574.5ZM694.5 471.3L690.5 484.3H698.5ZM694.5 491.8L690.5 504.8H698.5ZM694.5 512.3L690.5 525.3H698.5ZM694.5 526.8L690.5 539.8H698.5ZM694.5 528.7L690.5 541.7H698.5ZM819.5 532.3L815.5 519.3H823.5ZM819.5 547.2L815.5 534.2H823.5ZM819.5 553.3L815.5 540.3H823.5ZM819.5 531.3L815.5 518.3H823.5ZM819.5 538.0L815.5 525.0H823.5Z" stroke="#0000ff" stroke-width="1" fill="none" shape-rendering="crispEdges"/>
<path d="M196.5 685L190.5 691.5H202.5ZM321.5 685L315.5 691.5H327.5ZM445.5 685L439.5 691.5H451.5ZM570.5 685L564.5 691.5H576.5ZM694.5 685L688.5 691.5H700.5Z" stroke="#0000ff" stroke-width="1" fill="none" shape-rendering="crispEdges"/>
<path d="M819.5 684.5L812.5 692H826.5Z" fill="#0000ff"/>
<text x="196" y="354" text-anchor="middle">1</text><text x="196" y="271" text-anchor="middle" opacity="0.55">1</text><text x="196" y="290" text-anchor="middle" opacity="0.55">1</text><text x="196" y="310" text-anchor="middle" opacity="0.55">1</text><text x="196" y="330" text-anchor="middle" opacity="0.55">1</text><text x="321" y="479" text-anchor="middle">2</text><text x="321" y="398" text-anchor="middle" opacity="0.55">2</text><text x="321" y="416" text-anchor="middle" opacity="0.55">2</text><text x="321" y="436" text-anchor="middle" opacity="0.55">2</text><text x="321" y="458" text-anchor="middle" opacity="0.55">2</text><text x="445" y="531" text-anchor="middle">3</text><text x="445" y="450" text-anchor="middle" opacity="0.55">3</text><text x="445" y="470" text-anchor="middle" opacity="0.55">3</text><text x="445" y="492" text-anchor="middle" opacity="0.55">3</text><text x="445" y="514" text-anchor="middle" opacity="0.55">3</text><text x="570" y="549" text-anchor="middle">4</text><text x="570" y="478" text-anchor="middle" opacity="0.55">4</text><text x="570" y="498" text-anchor="middle" opacity="0.55">4</text><text x="570" y="520" text-anchor="middle" opacity="0.55">4</text><text x="570" y="538" text-anchor="middle" opacity="0.55">4</text><text x="694" y="555" text-anchor="middle">5</text><text x="694" y="498" text-anchor="middle" opacity="0.55">5</text><text x="694" y="518" text-anchor="middle" opacity="0.55">5</text><text x="694" y="539" text-anchor="middle" opacity="0.55">5</text><text x="694" y="553" text-anchor="middle" opacity="0.55">5</text><text x="819.5" y="515.5" text-anchor="middle">6</text>
</svg>
<div class="car">Carrier 749.999882 MHz</div><div class="car"><span class="hid">Carrier </span>749.999106<span class="hid"> MHz</span></div><div class="car">Carrier 49.999882<span class="hid"> MHz</span></div><div class="car"><span class="hid">Carrier </span>49.999094<span class="hid"> MHz</span></div><div class="pow">-0.9985 dBm</div><div class="pow"><span class="hid">-0.</span>0965<span class="hid"> dBm</span></div><div class="pow"><span class="hid">-0.</span>4085<span class="hid"> dBm</span></div><div class="pow"><span class="hid">-0.</span>6985<span class="hid"> dBm</span></div>
<pre class="mono"> 1:  100 Hz    -69.4801 dBc/Hz
 2:  1 kHz    -108.6941 dBc/Hz
 3:  10 kHz   -124.3092 dBc/Hz
 4:  100 kHz  -132.4193 dBc/Hz
 5:  1 MHz    -137.9304 dBc/Hz
&gt;6:  10 MHz   -154.8049 dBc/Hz
 X: Start 12 kHz
     Stop 20 MHz
   Center 10.006 MHz
     Span 19.988 MHz
=== Noise ===
Analysis Range X: Band Marker
Analysis Range Y: Band Marker
Intg Noise: -81.5096 dBc / 19.99 MHz
 RMS Noise: 118.868 µrad
            6.81058 mdeg
RMS Jitter: 236.488 fsec
Residual FM: 1.70199 kHz</pre>
<pre class="mono ex">                75 2360
                14 5325
                30 5 04
                 8 2016
                43 0 8
                 5 3  0







              2 2 28
             09 755
              288 1
            350 01
             672.584 Hz</pre>
<pre class="mono ex">                81  189
                20 739
                36 8 6
                44   07
                49 45
                 6  30







              3 15 0
            98.3506
            5 6350
            660 24
             621.918 Hz</pre>
<pre class="mono ex">                87 302
                26   35
                42  5 4
                49 80 5
                52
                 9







                9920
              2 425
              44 81
            1.5004  p
             570.513 Hz</pre>
<pre class="mono ex">                92 7644
                32 52 9
                46 5800
                5  201
                53 0 9
                61 48 0







              2   2
             06 032
              0680
             . 097  p
             576. 88 Hz</pre>

<div id="statrow"></div>
<div class="sb" style="left:9px;width:73px;letter-spacing:-0.47px">IF Gain 50dB</div>
<div class="sb" style="left:164px;width:145px">Freq Band [39M-101MHz]</div>
<div class="sb" style="left:390px;width:32px">Omit</div>
<div class="sb" style="left:504px;width:107px;letter-spacing:0.1px">LO Opt [&gt;150kHz]</div>
<div class="sb" style="left:693px;width:44px">814pts</div>
<div class="sb" style="left:820px;width:46px">Corre 5</div>
<div id="chrow"></div>
<div id="pn">Phase Noise</div>
<div id="start">Start 10 Hz</div>
<div id="stop">Stop 20 MHz</div>
<div id="swp">5/5</div>
<div id="dk"></div>
<div id="rpanel"></div>
<div id="rline"></div>
<div id="rtop"></div>
<div id="rwhite"></div>
<div id="sys">System</div>
<div id="kstrip"></div>
<div class="key" style="top:86px"><div class="k1">Print</div></div>
<div class="key" style="top:125px"><div class="k1">Abort Printing</div></div>
<div class="key" style="top:164px"><div class="k1">Printer Setup ...</div></div>
<div class="key" style="top:203px"><div class="k2a">Invert Image</div><div class="on">ON</div></div>
<div class="key dark" style="top:242px"><div class="k2a">Dump</div><div class="k2b">Screen Image ...</div></div>
<div class="key" style="top:281px"><div class="k1">Misc Setup</div><div class="arr"></div></div>
<div class="key" style="top:320px"><div class="k2a">Backlight</div><div class="on">ON</div></div>
<div class="key" style="top:359px"><div class="k1">Instrument Setup</div><div class="arr"></div></div>
<div class="key" style="top:398px"><div class="k1">Service Menu</div><div class="arr"></div></div>
<div class="key" style="top:437px"><div class="k2a">Product</div><div class="k2b">Information</div></div>
<div class="key" style="top:476px"><div class="k1">Help</div></div>
<div class="key" style="top:515px"><div class="k1">Return</div></div>

<div id="bbar"></div>
<div class="bx blue" style="left:383px;width:123px">Phase Noise: Hold</div>
<div class="bx" style="left:507px;width:29px;letter-spacing:-1.4px">Cor</div>
<div class="bx" style="left:536px;width:55px">Ctrl&nbsp; 0V</div>
<div class="bx" style="left:591px;width:59px;letter-spacing:-1.2px">Pow&nbsp; 0V</div>
<div class="bx kh" style="left:650px;width:64px">Attn 0dB</div>
<div class="bx" style="left:715px;width:57px;letter-spacing:-1px">ExtRef1</div>
<div class="bx" style="left:772px;width:58px;letter-spacing:-1px">ExtRef2</div>
<div class="bx" style="left:830px;width:36px;letter-spacing:-1.2px">Stop</div>
<div class="bx" style="left:866px;width:30px;letter-spacing:-1.2px">Svc</div>
<div class="bx blk" style="left:896px;width:124px">2017-10-13 17:13</div>
<div id="rline2"></div>
</body></html>
